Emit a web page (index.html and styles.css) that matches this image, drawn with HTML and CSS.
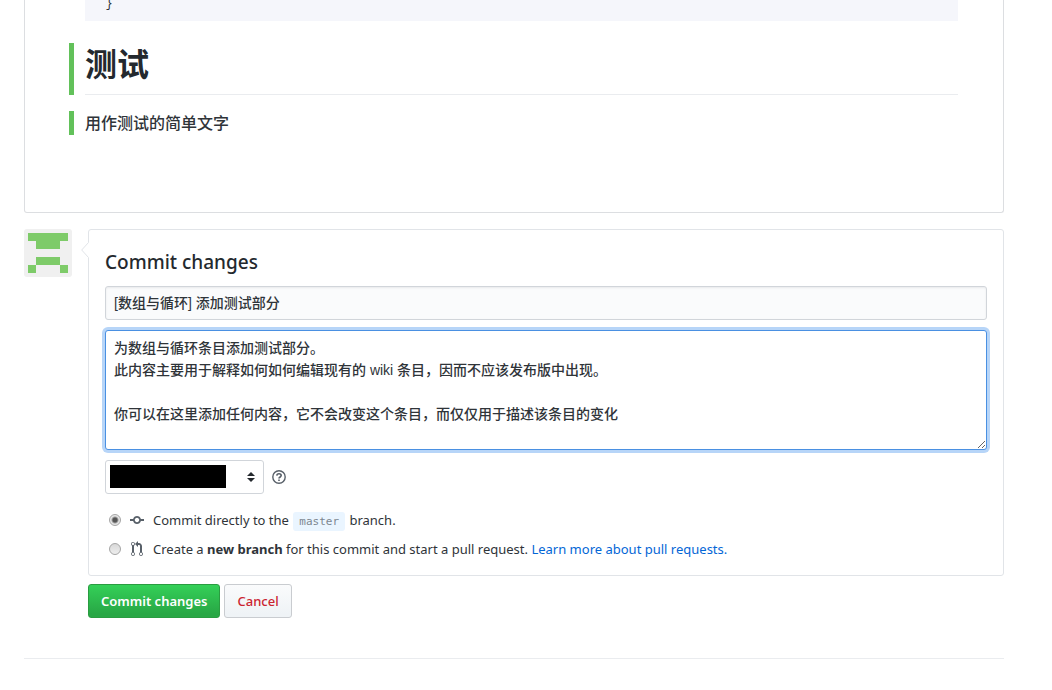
FILE: index.html
```
<!DOCTYPE html>
<html lang="zh-CN">
<head>
<meta charset="utf-8">
<meta name="viewport" content="width=device-width, initial-scale=1">
<title>Commit changes</title>
<link rel="stylesheet" href="styles.css">
</head>
<body>
<main class="page">
  <article class="preview">
    <pre class="code-block"><code>  }</code></pre>
    <div class="added added-heading"><h1 class="preview-title">测试</h1></div>
    <div class="added added-text"><p class="preview-text">用作测试的简单文字</p></div>
  </article>

  <form class="commit">
    <svg class="avatar" viewBox="0 0 48 48" role="img" aria-label="Avatar">
      <rect width="48" height="48" fill="#f0f0f0"/>
      <path fill="#7ecb69" d="M4 4h40v8h-8v8H12v-8H4zM12 28h24v8H12zM4 36h8v8H4zM36 36h8v8h-8z"/>
    </svg>
    <div class="commit-main">
      <section class="commit-box">
        <svg class="caret" viewBox="0 0 8 16" aria-hidden="true"><path fill="#fff" d="M8 0 .7 8 8 16z"/><path fill="none" stroke="#e1e4e8" d="M7.5.5.7 8l6.8 7.5"/></svg>
        <h2 class="commit-title">Commit changes</h2>
        <input class="field summary" type="text" aria-label="Commit summary" value="[数组与循环] 添加测试部分">
        <textarea class="field description" aria-label="Extended description">为数组与循环条目添加测试部分。
此内容主要用于解释如何如何编辑现有的 wiki 条目，因而不应该发布版中出现。

你可以在这里添加任何内容，它不会改变这个条目，而仅仅用于描述该条目的变化</textarea>
        <div class="email-row">
          <div class="select-wrap">
            <select class="email" aria-label="Commit email address"><option></option></select>
            <span class="redacted"></span>
            <svg class="arrows" viewBox="0 0 8 10" aria-hidden="true"><path fill="#24292e" d="M4 0l4 4H0zM4 10L0 6h8z"/></svg>
          </div>
          <svg class="help" viewBox="0 0 14 14" role="img" aria-label="Help"><circle cx="7" cy="7" r="6.2" fill="none" stroke="#586069" stroke-width="1.4"/><path fill="none" stroke="#586069" stroke-width="1.6" d="M4.8 5.6C4.9 4.4 5.8 3.8 7 3.8s2.2.7 2.2 1.8C9.200 7 7 7 7 8.600"/><path fill="#586069" d="M6.200 9.500h1.600v1.500H6.200z"/></svg>
        </div>
        <div class="choices">
          <div class="choice">
            <input class="radio" type="radio" name="target" id="direct" checked>
            <label class="choice-label" for="direct">
              <svg class="icon" viewBox="0 0 14 16" aria-hidden="true"><path fill="#586069" d="M10.860 7c-.45-1.720-2-3-3.860-3-1.860 0-3.410 1.280-3.860 3H0v2h3.140c.45 1.720 2 3 3.860 3 1.860 0 3.410-1.280 3.860-3H14V7h-3.140zM7 10.200c-1.220 0-2.200-.98-2.200-2.200 0-1.220.98-2.200 2.200-2.200 1.220 0 2.200.98 2.200 2.200 0 1.220-.98 2.200-2.200 2.200z"/></svg>
              <span>Commit directly to the <code class="branch">master</code> branch.</span>
            </label>
          </div>
          <div class="choice">
            <input class="radio" type="radio" name="target" id="pull">
            <label class="choice-label" for="pull">
              <svg class="icon" viewBox="-1 0 14 16" aria-hidden="true"><path fill="#586069" d="M11 11.280V5c-.03-.78-.34-1.470-.94-2.060C9.460 2.350 8.780 2.030 8 2H7V0L4 3l3 3V4h1c.27.020.48.110.69.310.21.200.3.420.31.690v6.280A1.993 1.993 0 0 0 10 15a1.993 1.993 0 0 0 1-3.720zm-1 2.920c-.66 0-1.200-.55-1.200-1.200 0-.65.55-1.200 1.200-1.200.65 0 1.200.55 1.200 1.200 0 .65-.55 1.200-1.200 1.200zM4 3c0-1.110-.89-2-2-2a1.993 1.993 0 0 0-1 3.720v6.560A1.993 1.993 0 0 0 2 15a1.993 1.993 0 0 0 1-3.720V4.720c.59-.34 1-.98 1-1.720zm-.8 10c0 .66-.55 1.200-1.200 1.200-.65 0-1.200-.55-1.200-1.200 0-.65.55-1.200 1.200-1.200.65 0 1.200.55 1.200 1.200zM2 4.200C1.340 4.200.8 3.650.8 3c0-.65.55-1.200 1.200-1.200.65 0 1.200.55 1.200 1.200 0 .65-.55 1.200-1.200 1.200z"/></svg>
              <span>Create a <strong>new branch</strong> for this commit and start a pull request. <a class="link" href="#">Learn more about pull requests.</a></span>
            </label>
          </div>
        </div>
      </section>
      <div class="actions">
        <button class="btn btn-primary" type="submit">Commit changes</button>
        <button class="btn btn-cancel" type="button">Cancel</button>
      </div>
    </div>
  </form>
  <hr class="divider">
</main>
</body>
</html>
```
FILE: styles.css
```
* { box-sizing: border-box; }

body {
  margin: 0;
  background: #fff;
  color: #2f3439;
  font: 13px/20px "Noto Sans", "Noto Sans CJK SC", sans-serif;
}

.page { padding: 0 48px 0 24px; }

.preview {
  padding: 0 45px 77px 44px;
  border: 1px solid #dcdee1;
  border-top: 0;
  border-radius: 0 0 3px 3px;
}

.code-block {
  margin: 0 0 22px 16px;
  padding: 0 6px 13px;
  background: #f5f6fb;
  font: 12px/8px "Liberation Mono", monospace;
}

.code-block code { font: inherit; }

.added {
  padding-left: 11px;
  border-left: 5px solid #62c15a;
}

.added-heading { margin-bottom: 16px; }

.preview-title {
  margin: 0;
  padding-bottom: 13px;
  border-bottom: 1px solid #eaecef;
  color: #24292e;
  font: 700 32px/38px "Noto Sans CJK SC", sans-serif;
}

.preview-text {
  margin: 0;
  padding-bottom: 2px;
  font: 500 16px/22px "Noto Sans CJK SC", sans-serif;
}

.commit {
  display: flex;
  align-items: flex-start;
  gap: 16px;
  margin-top: 16px;
}

.avatar { width: 48px; height: 48px; flex: none; border-radius: 3px; }

.commit-main { flex: 1; min-width: 0; }

.commit-box {
  position: relative;
  padding: 20px 16px;
  padding-bottom: 16px;
  border: 1px solid #e1e4e8;
  border-radius: 3px;
}

.caret { position: absolute; top: 12px; left: -8px; width: 8px; height: 16px; }

.commit-title { margin: 0 0 12px; color: #24292e; font-size: 19px; line-height: 24px; font-weight: 500; }

.field {
  display: block;
  width: 100%;
  border: 1px solid #d1d5da;
  border-radius: 3px;
  color: #2f3439;
  font: 500 14px/22px "Liberation Sans", "Noto Sans CJK SC", sans-serif;
}

.summary {
  height: 34px;
  margin-bottom: 10px;
  padding: 0 8px 2px;
  background: #fafbfc;
  box-shadow: inset 0 1px 2px rgba(27, 31, 35, 0.075);
}

.description {
  height: 120px;
  padding: 6px 8px;
  border-color: #4a90e2;
  outline: none;
  box-shadow: 0 0 0 3px #b7d5f8;
  resize: vertical;
}

.email-row { display: flex; align-items: center; gap: 8px; margin-top: 10px; }

.select-wrap { position: relative; width: 159px; height: 34px; }

.email {
  width: 100%;
  height: 100%;
  appearance: none;
  border: 1px solid #d1d5da;
  border-radius: 3px;
  background: #fff;
}

.redacted { position: absolute; top: 5px; left: 5px; width: 116px; height: 23px; background: #000; pointer-events: none; }

.arrows { position: absolute; top: 12px; right: 9px; width: 8px; height: 10px; pointer-events: none; }

.help { width: 14px; height: 14px; }

.choices { display: flex; flex-direction: column; gap: 9px; margin-top: 16px; padding-left: 4px; }

.choice { display: flex; align-items: center; gap: 9px; }

.radio {
  flex: none;
  width: 12px;
  height: 12px;
  margin: 0;
  appearance: none;
  border: 1px solid #a5a5a5;
  border-radius: 50%;
  background: linear-gradient(#d8d8d8, #eeeeee);
}

.radio:checked { background: radial-gradient(circle, #555 0 2px, #e6e6e6 4px); }

.choice-label { display: flex; align-items: center; gap: 9px; }

.icon { flex: none; width: 14px; height: 16px; }

.branch {
  margin: 0 1px;
  padding: 3px 6px;
  border-radius: 3px;
  background: #eaf5ff;
  color: #7c868f;
  font: 11px/12px "DejaVu Sans Mono", monospace;
}

.link { color: #0366d6; text-decoration: none; }

.actions { display: flex; gap: 4px; margin-top: 8px; }

.btn {
  height: 34px;
  padding: 0 12px;
  border: 1px solid #c9ccd0;
  border-radius: 3px;
  font: 500 13px/20px "Noto Sans", sans-serif;
}

.btn-primary {
  border-color: #2a9c41;
  background: linear-gradient(#34d058, #28a745 90%);
  color: #fff;
  font-weight: 600;
}

.btn-cancel { background: linear-gradient(#fafbfc, #eff3f6 90%); color: #cb2431; }

.divider { margin: 40px 0 0; border: 0; border-top: 1px solid #eaecef; }
```
